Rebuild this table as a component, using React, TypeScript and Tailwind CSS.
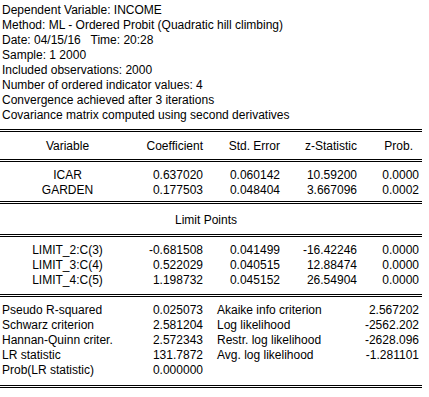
const info = [
  "Dependent Variable: INCOME",
  "Method: ML - Ordered Probit (Quadratic hill climbing)",
  "Date: 04/15/16   Time: 20:28",
  "Sample: 1 2000",
  "Included observations: 2000",
  "Number of ordered indicator values: 4",
  "Convergence achieved after 3 iterations",
  "Covariance matrix computed using second derivatives",
];

const coefs = [
  ["ICAR", "0.637020", "0.060142", "10.59200", "0.0000"],
  ["GARDEN", "0.177503", "0.048404", "3.667096", "0.0002"],
];

const limits = [
  ["LIMIT_2:C(3)", "-0.681508", "0.041499", "-16.42246", "0.0000"],
  ["LIMIT_3:C(4)", "0.522029", "0.040515", "12.88474", "0.0000"],
  ["LIMIT_4:C(5)", "1.198732", "0.045152", "26.54904", "0.0000"],
];

const stats = [
  ["Pseudo R-squared", "0.025073", "Akaike info criterion", "2.567202"],
  ["Schwarz criterion", "2.581204", "Log likelihood", "-2562.202"],
  ["Hannan-Quinn criter.", "2.572343", "Restr. log likelihood", "-2628.096"],
  ["LR statistic", "131.7872", "Avg. log likelihood", "-1.281101"],
  ["Prob(LR statistic)", "0.000000", "", ""],
];

const cols = "grid grid-cols-[135px_68px_77px_77px_62px]";

const Rule = () => <div className="h-[3px] w-[422px] border-y border-black" />;

const Rows = ({ rows }: { rows: string[][] }) => (
  <>
    {rows.map((r) => (
      <div key={r[0]} className={cols}>
        <div className="text-center">{r[0]}</div>
        {r.slice(1).map((v, i) => (
          <div key={i} className="text-right whitespace-pre">
            {v}
          </div>
        ))}
      </div>
    ))}
  </>
);

export default function App() {
  return (
    <div className="w-[429px] h-[397px] bg-white text-black font-['Liberation_Sans',Arial,sans-serif] text-[12px] leading-[15px] overflow-hidden">
      <div className="pt-[3px] pl-[2px] pb-[6px]">
        {info.map((line) => (
          <div key={line} className="whitespace-pre">
            {line}
          </div>
        ))}
      </div>

      <Rule />
      <div className={`${cols} h-[27px] pt-[7px]`}>
        <div className="text-center">Variable</div>
        <div className="text-right">Coefficient</div>
        <div className="text-right">Std. Error</div>
        <div className="text-right">z-Statistic</div>
        <div className="text-right pr-[6px]">Prob.</div>
      </div>

      <Rule />
      <div className="h-[39px] pt-[6px]">
        <Rows rows={coefs} />
      </div>

      <Rule />
      <div className="h-[30px] pt-[9px] pl-[175px]">Limit Points</div>

      <Rule />
      <div className="h-[57px] pt-[6px]">
        <Rows rows={limits} />
      </div>

      <Rule />
      <div className="h-[88px] pt-[6px]">
        {stats.map((s) => (
          <div key={s[0]} className="grid grid-cols-[215px_202px] pl-[2px]">
            <div className="flex justify-between pr-[14px]">
              <span>{s[0]}</span>
              <span>{s[1]}</span>
            </div>
            <div className="flex justify-between">
              <span>{s[2]}</span>
              <span>{s[3]}</span>
            </div>
          </div>
        ))}
      </div>
      <Rule />
    </div>
  );
}
